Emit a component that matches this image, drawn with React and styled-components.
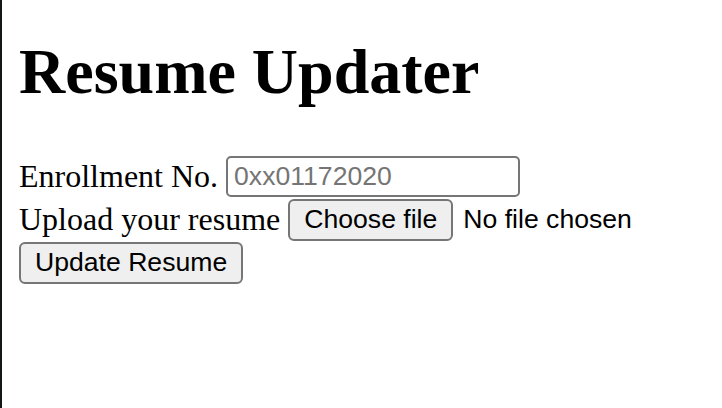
import styled, { createGlobalStyle } from "styled-components";

const GlobalStyle = createGlobalStyle`
  html, body {
    margin: 0;
    padding: 0;
    background: #fff;
  }
  body {
    font-family: "Liberation Serif", "Times New Roman", serif;
    color: #000;
  }
`;

const Page = styled.div`
  min-height: 100vh;
  box-sizing: border-box;
  border-left: 2px solid #141814;
  padding: 35px 0 0 17px;
`;

const Title = styled.h1`
  margin: 0 0 46px;
  font-size: 64px;
  line-height: 74px;
  font-weight: bold;
`;

const Form = styled.form`
  display: flex;
  flex-direction: column;
  align-items: flex-start;
`;

const Row = styled.div`
  display: flex;
  align-items: center;
  gap: ${(p) => p.gap || 8}px;
  height: 43px;
  font-size: 32px;
  line-height: 37px;
`;

const TextInput = styled.input`
  box-sizing: border-box;
  width: 294px;
  height: 41px;
  padding: 2px 6px;
  border: 2px solid #767676;
  border-radius: 5px;
  font-family: "Liberation Sans", Arial, sans-serif;
  font-size: 26.6px;
  color: #000;
  background: #fff;
  outline: none;

  &::placeholder {
    color: #757575;
  }
`;

const Button = styled.button`
  box-sizing: border-box;
  height: 42px;
  padding: 0 ${(p) => p.pad || 14}px;
  border: 2px solid #767676;
  border-radius: 6px;
  background: #efefef;
  color: #000;
  font-family: "Liberation Sans", Arial, sans-serif;
  font-size: 26.6px;
  cursor: pointer;
`;

const FileName = styled.span`
  font-family: "Liberation Sans", Arial, sans-serif;
  font-size: 26.6px;
`;

export default function App() {
  return (
    <>
      <GlobalStyle />
      <Page>
        <Title>Resume Updater</Title>
        <Form onSubmit={(e) => e.preventDefault()}>
          <Row>
            <span>Enrollment No.</span>
            <TextInput type="text" placeholder="0xx01172020" />
          </Row>
          <Row gap={8}>
            <span>Upload your resume</span>
            <Row gap={10}>
              <Button type="button" pad={14}>Choose file</Button>
              <FileName>No file chosen</FileName>
            </Row>
          </Row>
          <Row>
            <Button type="submit" pad={14}>Update Resume</Button>
          </Row>
        </Form>
      </Page>
    </>
  );
}
